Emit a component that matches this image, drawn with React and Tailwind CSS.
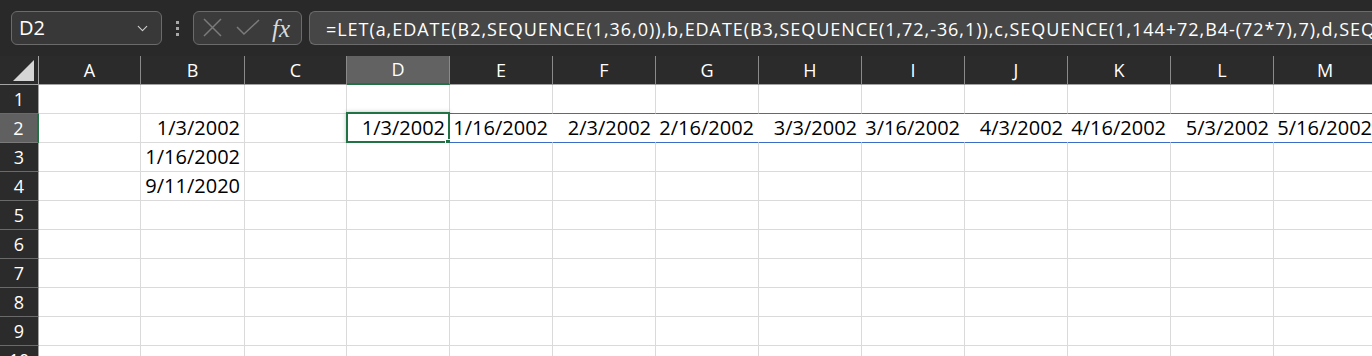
import { ChevronDown } from "lucide-react";

const cols = ["A", "B", "C", "D", "E", "F", "G", "H", "I", "J", "K", "L", "M"];
const spill = [
  "1/3/2002",
  "1/16/2002",
  "2/3/2002",
  "2/16/2002",
  "3/3/2002",
  "3/16/2002",
  "4/3/2002",
  "4/16/2002",
  "5/3/2002",
  "5/16/2002",
];
const bValues = { 2: "1/3/2002", 3: "1/16/2002", 4: "9/11/2020" };
const rows = [1, 2, 3, 4, 5, 6, 7, 8, 9, 10];

const formula =
  "=LET(a,EDATE(B2,SEQUENCE(1,36,0)),b,EDATE(B3,SEQUENCE(1,72,-36,1)),c,SEQUENCE(1,144+72,B4-(72*7),7),d,SEQUENCE(1,36*6,0),e,a+d)";

function FormulaBar() {
  return (
    <div className="flex h-[56px] items-center bg-[#292929] pl-[11px]">
      {/* Name box */}
      <div className="flex h-[34px] w-[151px] shrink-0 items-center justify-between rounded-[6px] border border-[#6b6b6b] bg-[#383838] pl-[7px] pr-[10px]">
        <span className="text-[20px] text-white">D2</span>
        <ChevronDown size={17} strokeWidth={1.6} className="text-[#cfcfcf]" />
      </div>

      {/* Splitter dots */}
      <div className="flex w-[31px] shrink-0 flex-col items-center gap-[3px]">
        <span className="h-[3px] w-[3px] bg-[#a8a8a8]" />
        <span className="h-[3px] w-[3px] bg-[#a8a8a8]" />
        <span className="h-[3px] w-[3px] bg-[#a8a8a8]" />
      </div>

      {/* Cancel / enter / fx */}
      <div className="flex h-[34px] w-[109px] shrink-0 items-center rounded-[6px] border border-[#6b6b6b] bg-[#3b3b3b] pl-[8px]">
        <svg width="20" height="20" viewBox="0 0 20 20" className="shrink-0">
          <path d="M2 1 L19 18 M19 1 L2 18" stroke="#7b7b7b" strokeWidth="1.5" fill="none" />
        </svg>
        <svg width="24" height="18" viewBox="0 0 24 18" className="ml-[14px] shrink-0">
          <path d="M1 8 L8 15 L23 1" stroke="#7b7b7b" strokeWidth="1.5" fill="none" />
        </svg>
        <span className="ml-[12px] text-[25px] italic leading-none text-[#dadada] [font-family:'Liberation_Serif',serif]">
          fx
        </span>
      </div>

      {/* Formula text */}
      <div className="ml-[7px] flex h-[34px] min-w-0 flex-1 items-center overflow-hidden rounded-l-[6px] border-y border-l border-[#6b6b6b] bg-[#464646] pl-[16px]">
        <span className="whitespace-nowrap pt-[2px] text-[18px] tracking-[0.95px] text-white">{formula}</span>
      </div>
    </div>
  );
}

function Grid() {
  return (
    <div className="grid grid-cols-[39px_102px_104px_102px_103px_repeat(9,103px)]">
      {/* header row */}
      <div className="flex h-[29px] items-end justify-end border-r border-b border-[#a3a3a3] bg-[#2b2b2b] pb-[3px] pr-[4px]">
        <svg width="21" height="21" viewBox="0 0 21 21">
          <polygon points="21,0 21,21 0,21" fill="#d6d6d6" />
        </svg>
      </div>
      {cols.map((c) => (
        <div
          key={c}
          className={
            c === "D"
              ? "flex h-[29px] items-center justify-center border-r border-b-2 border-r-[#8a8a8a] border-b-[#217346] bg-[#626262] pb-[1px] text-[18px] text-white"
              : "flex h-[29px] items-center justify-center border-r border-b border-r-[#8a8a8a] border-b-[#a3a3a3] bg-[#2b2b2b] text-[18px] text-white"
          }
        >
          {c}
        </div>
      ))}

      {rows.map((r) => (
        <Row key={r} r={r} />
      ))}
    </div>
  );
}

function Row({ r }) {
  const selected = r === 2;
  return (
    <>
      <div
        className={
          selected
            ? "flex h-[29px] items-center justify-center border-r-2 border-b border-r-[#217346] border-b-[#7a7a7a] bg-[#606060] text-[18px] text-white"
            : "flex h-[29px] items-center justify-center border-r border-b border-r-[#a3a3a3] border-b-[#6a6a6a] bg-[#2b2b2b] text-[18px] text-white"
        }
      >
        {r}
      </div>
      {cols.map((c, i) => {
        const inSpill = r === 2 && i >= 3;
        const aboveSpill = r === 1 && i >= 3;
        let cls =
          "relative flex h-[29px] items-center justify-end overflow-visible whitespace-nowrap bg-white pr-[4px] text-[20px] text-black [font-family:'Open_Sans',sans-serif] border-b border-r";
        if (inSpill) cls += " border-b-[#3b6cc6] border-r-white";
        else if (aboveSpill) cls += " border-b-[#3b6cc6] border-r-[#dadada]";
        else cls += " border-[#dadada]";
        let text = "";
        if (c === "B" && bValues[r]) text = bValues[r];
        if (inSpill) text = spill[i - 3];
        return (
          <div key={c} className={cls}>
            {text}
            {r === 2 && c === "D" && (
              <>
                <div className="pointer-events-none absolute -left-[1px] -top-[2px] h-[31px] w-[104px] border-2 border-[#217346] shadow-[0_0_4px_rgba(0,0,0,0.25)]" />
                <div className="absolute -bottom-[4px] -right-[3px] h-[7px] w-[7px] border border-white bg-[#217346]" />
              </>
            )}
          </div>
        );
      })}
    </>
  );
}

export default function App() {
  return (
    <div className="h-[356px] w-[1372px] overflow-hidden bg-white [font-family:'Open_Sans','Noto_Sans',sans-serif]">
      <FormulaBar />
      <Grid />
    </div>
  );
}
